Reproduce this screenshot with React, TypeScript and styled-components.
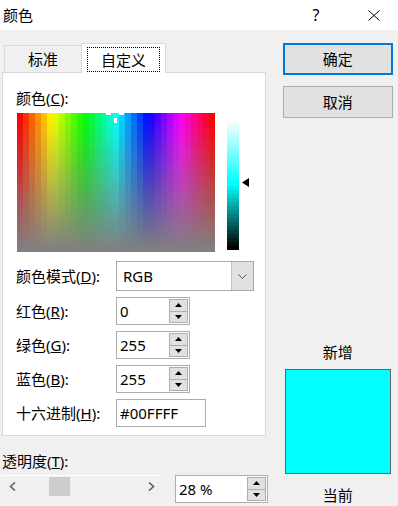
import { Fragment } from 'react';
import styled, { createGlobalStyle } from 'styled-components';

const GlobalStyle = createGlobalStyle`
  html, body {
    margin: 0;
    padding: 0;
    background: #f0f0f0;
  }
  body {
    font-family: "Noto Sans", "Noto Sans CJK SC", sans-serif;
    font-size: 15px;
    line-height: 20px;
    color: #000;
  }
`;

const Window = styled.div`
  width: 398px;
  height: 506px;
  display: flex;
  flex-direction: column;
  background: #f0f0f0;
  overflow: hidden;
`;

const TitleBar = styled.div`
  height: 30px;
  flex-shrink: 0;
  background: #fff;
  display: flex;
  align-items: center;
  padding-left: 3px;
`;

const Title = styled.span`
  flex: 1;
`;

const CaptionButton = styled.div<{ $w: number; $mr: number }>`
  width: ${p => p.$w}px;
  margin-right: ${p => p.$mr}px;
  display: flex;
  justify-content: center;
  align-items: center;
  font-size: 16px;
`;

const Body = styled.div`
  flex: 1;
  display: flex;
  gap: 14px;
  padding: 13px 5px 0 2px;
`;

const LeftColumn = styled.div`
  width: 268px;
  display: flex;
  flex-direction: column;
`;

const TabStrip = styled.div`
  height: 29px;
  display: flex;
  align-items: flex-end;
  padding-left: 2px;
`;

const Tab = styled.div<{ $active?: boolean }>`
  box-sizing: border-box;
  display: flex;
  justify-content: center;
  align-items: ${p => (p.$active ? 'flex-start' : 'center')};
  border: 1px solid #d9d9d9;
  border-bottom: none;
  ${p =>
    p.$active
      ? `
    width: 85px;
    height: 30px;
    margin-bottom: -1px;
    padding-top: 3px;
    background: #fff;
    position: relative;
    z-index: 1;
  `
      : `
    width: 77px;
    height: 27px;
    border-right: none;
    background: #f0f0f0;
  `}
`;

const FocusRect = styled.span`
  box-sizing: border-box;
  width: 73px;
  height: 25px;
  border: 1px dotted #000;
  display: flex;
  justify-content: center;
  align-items: center;
`;

const Panel = styled.div`
  box-sizing: border-box;
  width: 264px;
  height: 364px;
  background: #fff;
  border: 1px solid #d9d9d9;
  padding: 15px 0 0 13px;
  display: flex;
  flex-direction: column;
`;

const PickerRow = styled.div`
  display: flex;
  margin-top: 5px;
  margin-left: 1px;
  gap: 12px;
`;

const LumWrap = styled.div`
  padding-top: 4px;
`;

const FormGrid = styled.div`
  display: grid;
  grid-template-columns: 100px auto;
  row-gap: 6px;
  align-items: center;
  justify-items: start;
  margin-top: 7px;
`;

const Label = styled.span`
  white-space: nowrap;
`;

const Select = styled.div`
  box-sizing: border-box;
  width: 138px;
  height: 30px;
  border: 1px solid #a9a9a9;
  background: #fff;
  display: flex;
`;

const SelectValue = styled.span`
  flex: 1;
  padding-left: 6px;
  display: flex;
  align-items: center;
`;

const SelectButton = styled.div`
  width: 21px;
  background: #e1e1e1;
  border-left: 1px solid #c4c4c4;
  display: flex;
  justify-content: center;
  align-items: center;
`;

const Spinner = styled.div<{ $w: number }>`
  box-sizing: border-box;
  width: ${p => p.$w}px;
  height: 28px;
  border: 1px solid #adadad;
  background: #fff;
  display: flex;
  padding: 1px 1px 1px 0;
`;

const SpinValue = styled.span`
  flex: 1;
  padding-left: 3px;
  display: flex;
  align-items: center;
`;

const SpinButtons = styled.div`
  width: 19px;
  display: flex;
  flex-direction: column;
`;

const SpinButton = styled.div`
  box-sizing: border-box;
  flex: 1;
  background: #e1e1e1;
  border: 1px solid #adadad;
  display: flex;
  justify-content: center;
  align-items: center;
  & + & {
    border-top: none;
  }
`;

const TextBox = styled.div`
  box-sizing: border-box;
  width: 90px;
  height: 28px;
  border: 1px solid #adadad;
  background: #fff;
  padding-left: 3px;
  display: flex;
  align-items: center;
`;

const SectionLabel = styled.div`
  margin-top: 15px;
`;

const SliderRow = styled.div`
  display: flex;
  align-items: flex-start;
  gap: 14px;
  margin-top: 4px;
`;

const ScrollBar = styled.div`
  width: 159px;
  height: 20px;
  border-top: 1px solid #fff;
  display: flex;
  align-items: center;
`;

const ScrollArrow = styled.div`
  width: 20px;
  height: 20px;
  display: flex;
  justify-content: center;
  align-items: center;
`;

const ScrollTrack = styled.div`
  flex: 1;
  height: 20px;
  display: flex;
  align-items: center;
`;

const Thumb = styled.div`
  width: 21px;
  height: 19px;
  background: #cdcdcd;
`;

const RightColumn = styled.div`
  width: 111px;
  display: flex;
  flex-direction: column;
  padding-bottom: 1px;
`;

const Button = styled.div<{ $default?: boolean }>`
  box-sizing: border-box;
  height: 32px;
  background: #e1e1e1;
  border: ${p => (p.$default ? '2px solid #0078d7' : '1px solid #adadad')};
  display: flex;
  justify-content: center;
  align-items: center;
  & + & {
    margin-top: 11px;
  }
`;

const Preview = styled.div`
  margin-top: auto;
  display: flex;
  flex-direction: column;
  align-items: center;
`;

const Swatch = styled.div<{ $color: string }>`
  box-sizing: border-box;
  width: 106px;
  height: 105px;
  margin: 7px 0 11px;
  border: 1px solid #646464;
  background: ${p => p.$color};
`;

const SPEC_W = 198;
const SPEC_H = 139;
const COLS = 33;
const ROWS = 28;

const Spectrum = () => {
  const cw = SPEC_W / COLS;
  const rh = SPEC_H / ROWS;
  const cells = [];
  for (let i = 0; i < COLS; i++) {
    for (let j = 0; j < ROWS; j++) {
      const h = (i / (COLS - 1)) * 360;
      const s = 100 - (j / (ROWS - 1)) * 100;
      cells.push(
        <rect
          key={`${i}-${j}`}
          x={i * cw}
          y={j * rh}
          width={cw + 0.6}
          height={rh + 0.6}
          fill={`hsl(${h.toFixed(1)}, ${s.toFixed(1)}%, 50%)`}
        />
      );
    }
  }
  return (
    <svg width={SPEC_W} height={SPEC_H} shapeRendering="crispEdges">
      {cells}
      {/* crosshair, top arm is clipped off */}
      <rect x={89} y={0} width={5} height={2} fill="#fff" />
      <rect x={102} y={0} width={5} height={2} fill="#fff" />
      <rect x={97} y={5} width={3} height={5} fill="#fff" />
    </svg>
  );
};

const LUM_H = 133;
const LUM_ROWS = 33;

const LuminanceBar = () => {
  const rh = LUM_H / LUM_ROWS;
  const rows = [];
  for (let j = 0; j < LUM_ROWS; j++) {
    const l = 100 - (j / (LUM_ROWS - 1)) * 100;
    rows.push(
      <rect key={j} x={0} y={j * rh} width={12} height={rh + 0.6} fill={`hsl(180, 100%, ${l.toFixed(1)}%)`} />
    );
  }
  return (
    <svg width={22} height={LUM_H} shapeRendering="crispEdges">
      {rows}
      <polygon points="15,65.5 22,61 22,70" fill="#000" shapeRendering="auto" />
    </svg>
  );
};

const UpArrow = () => (
  <svg width={7} height={4}>
    <polygon points="3.5,0 7,4 0,4" fill="#000" />
  </svg>
);

const DownArrow = () => (
  <svg width={7} height={4}>
    <polygon points="0,0 7,0 3.5,4" fill="#000" />
  </svg>
);

const NumberSpinner = ({ value, width }: { value: string; width: number }) => (
  <Spinner $w={width}>
    <SpinValue>{value}</SpinValue>
    <SpinButtons>
      <SpinButton>
        <UpArrow />
      </SpinButton>
      <SpinButton>
        <DownArrow />
      </SpinButton>
    </SpinButtons>
  </Spinner>
);

const Chevron = ({ dir }: { dir: 'left' | 'right' }) => (
  <svg width={7} height={9}>
    <polyline
      points={dir === 'left' ? '6,0.5 1.5,4.5 6,8.5' : '1,0.5 5.5,4.5 1,8.5'}
      fill="none"
      stroke="#606060"
      strokeWidth={1.6}
    />
  </svg>
);

const rows = [
  { label: '红色', key: 'R', value: '0' },
  { label: '绿色', key: 'G', value: '255' },
  { label: '蓝色', key: 'B', value: '255' },
];

export default function App() {
  const transparency = 28;
  return (
    <>
      <GlobalStyle />
      <Window>
        <TitleBar>
          <Title>颜色</Title>
          <CaptionButton $w={20} $mr={36}>?</CaptionButton>
          <CaptionButton $w={24} $mr={12}>
            <svg width={12} height={11}>
              <path d="M0.5 0.5 L11.5 10.5 M11.5 0.5 L0.5 10.5" stroke="#000" strokeWidth={1} />
            </svg>
          </CaptionButton>
        </TitleBar>
        <Body>
          <LeftColumn>
            <TabStrip>
              <Tab>标准</Tab>
              <Tab $active>
                <FocusRect>自定义</FocusRect>
              </Tab>
            </TabStrip>
            <Panel>
              <Label>
                颜色(<u>C</u>):
              </Label>
              <PickerRow>
                <Spectrum />
                <LumWrap>
                  <LuminanceBar />
                </LumWrap>
              </PickerRow>
              <FormGrid>
                <Label>
                  颜色模式(<u>D</u>):
                </Label>
                <Select>
                  <SelectValue>RGB</SelectValue>
                  <SelectButton>
                    <svg width={9} height={5}>
                      <polyline points="0.5,0.5 4.5,4.5 8.5,0.5" fill="none" stroke="#555" strokeWidth={1} />
                    </svg>
                  </SelectButton>
                </Select>
                {rows.map(r => (
                  <Fragment key={r.key}>
                    <Label>
                      {r.label}(<u>{r.key}</u>):
                    </Label>
                    <NumberSpinner value={r.value} width={74} />
                  </Fragment>
                ))}
                <Label>
                  十六进制(<u>H</u>):
                </Label>
                <TextBox>#00FFFF</TextBox>
              </FormGrid>
            </Panel>
            <SectionLabel>
              透明度(<u>T</u>):
            </SectionLabel>
            <SliderRow>
              <ScrollBar>
                <ScrollArrow>
                  <Chevron dir="left" />
                </ScrollArrow>
                <ScrollTrack>
                  <Thumb style={{ marginLeft: Math.round((transparency / 100) * 98) }} />
                </ScrollTrack>
                <ScrollArrow>
                  <Chevron dir="right" />
                </ScrollArrow>
              </ScrollBar>
              <NumberSpinner value={`${transparency} %`} width={93} />
            </SliderRow>
          </LeftColumn>
          <RightColumn>
            <Button $default>确定</Button>
            <Button>取消</Button>
            <Preview>
              <span>新增</span>
              <Swatch $color="#00ffff" />
              <span>当前</span>
            </Preview>
          </RightColumn>
        </Body>
      </Window>
    </>
  );
}
